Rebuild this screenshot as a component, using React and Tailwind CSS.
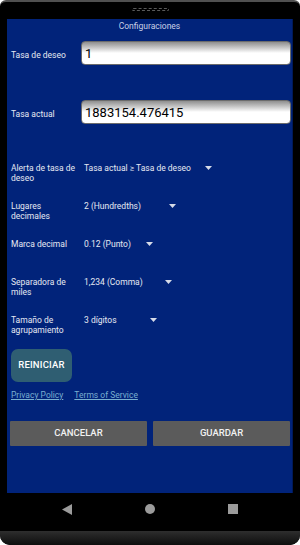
import React from "react";

const font = { fontFamily: "Roboto, 'Noto Sans', sans-serif" };

const rows = [
  { label: ["Alerta de tasa de", "deseo"], value: "Tasa actual ≥ Tasa de deseo", width: "w-[129px]", mt: "mt-[39px]" },
  { label: ["Lugares", "decimales"], value: "2 (Hundredths)", width: "w-[93px]", mt: "mt-[18px]" },
  { label: ["Marca decimal"], value: "0.12 (Punto)", width: "w-[70px]", mt: "mt-[18px]" },
  { label: ["Separadora de", "miles"], value: "1,234 (Comma)", width: "w-[89px]", mt: "mt-[28px]" },
  { label: ["Tamaño de", "agrupamiento"], value: "3 dígitos", width: "w-[74px]", mt: "mt-[18px]" },
];

function TextInput({ value }) {
  return (
    <div className="flex-1 h-[24px] rounded-[4px] border border-[#6b6b6b] bg-gradient-to-b from-[#8f8f8f] via-white to-white flex items-center pl-[3px]">
      <span className="text-[13px] leading-none text-black">{value}</span>
    </div>
  );
}

function Spinner({ value, width }) {
  return (
    <div className={`${width} flex items-center justify-between`}>
      <span className="text-[8.5px] leading-[10px] text-[#e6e9f2] whitespace-nowrap">{value}</span>
      <svg width="7" height="4" viewBox="0 0 7 4" className="mr-[1px]">
        <polygon points="0,0 7,0 3.5,4" fill="#d6dbe8" />
      </svg>
    </div>
  );
}

export default function App() {
  return (
    <div className="w-[300px] h-[545px] bg-white" style={font}>
      <div className="w-full h-full bg-black rounded-t-[6px] rounded-b-[10px] overflow-hidden flex flex-col border-t-2 border-[#505050]">
        {/* top bezel */}
        <div className="h-[17px] flex justify-center pt-[6px]">
          <div className="w-[37px] h-[3px] rounded-full border border-dashed border-[#5a5a5a]" />
        </div>

        {/* screen */}
        <div className="px-[7px]">
          <div className="h-[474px] bg-[#01237a] border-r border-[#001a5a] flex flex-col">
            <div className="h-[13px] pt-[1px] text-center text-[8.5px] leading-[13px] text-[#c9d0e6]">Configuraciones</div>

            <div className="flex items-center mt-[9px] pr-[1px]">
              <div className="w-[74px] pl-[4px] pt-[5px] text-[8.5px] text-[#e6e9f2]">Tasa de deseo</div>
              <TextInput value="1" />
            </div>

            <div className="flex items-center mt-[35px] pr-[1px]">
              <div className="w-[74px] pl-[4px] pt-[5px] text-[8.5px] text-[#e6e9f2]">Tasa actual</div>
              <TextInput value="1883154.476415" />
            </div>

            {rows.map((r) => (
              <div key={r.value} className={`flex items-start ${r.mt}`}>
                <div className="w-[77px] pl-[4px] text-[8.5px] leading-[10px] text-[#e6e9f2]">
                  {r.label.map((l) => (
                    <div key={l} className="whitespace-nowrap">{l}</div>
                  ))}
                </div>
                <Spinner value={r.value} width={r.width} />
              </div>
            ))}

            <button className="mt-[14px] ml-[4px] w-[61px] h-[33px] rounded-[7px] bg-[#2f5e72] text-white text-[9.5px] font-medium tracking-[0.2px]">
              REINICIAR
            </button>

            <div className="flex gap-[11px] ml-[4px] mt-[8px] text-[8.5px] leading-[10px] text-[#79aed0]">
              <span className="underline">Privacy Policy</span>
              <span className="underline">Terms of Service</span>
            </div>

            <div className="flex gap-[6px] mt-[21px] ml-[3px] mr-[2px]">
              <button className="flex-1 h-[25px] rounded-[1px] bg-[#5b5b5b] text-[#f2f2f2] text-[9.5px] font-medium">CANCELAR</button>
              <button className="flex-1 h-[25px] rounded-[1px] bg-[#5b5b5b] text-[#f2f2f2] text-[9.5px] font-medium">GUARDAR</button>
            </div>
          </div>
        </div>

        {/* nav bar */}
        <div className="h-[38px] flex items-center justify-between px-[62px] pb-[6px]">
          <svg width="10" height="11" viewBox="0 0 10 11">
            <polygon points="10,0 10,11 0,5.5" fill="#9b9b9b" />
          </svg>
          <div className="w-[10px] h-[10px] rounded-full bg-[#9b9b9b]" />
          <div className="w-[10px] h-[10px] bg-[#9b9b9b]" />
        </div>

        {/* bottom edge */}
        <div className="flex-1 bg-gradient-to-b from-[#2e2e2e] to-[#0e0e0e]" />
      </div>
    </div>
  );
}
